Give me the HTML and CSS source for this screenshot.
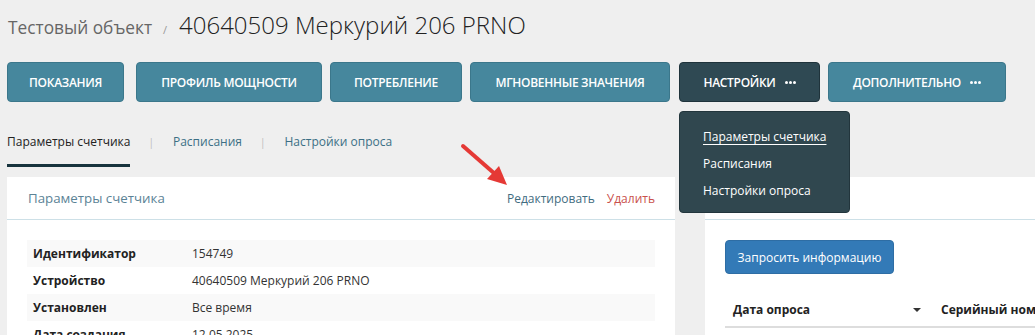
FILE: index.html
```html
<!DOCTYPE html>
<html lang="ru">
<head>
<meta charset="utf-8">
<title>40640509 Меркурий 206 PRNO</title>
<link rel="stylesheet" href="styles.css">
</head>
<body>
<div class="page">
  <div class="breadcrumb">
    <span class="crumb">Тестовый объект</span>
    <span class="sep">/</span>
    <h1 class="title">40640509 Меркурий 206 PRNO</h1>
  </div>

  <nav class="nav">
    <a class="btn b1">ПОКАЗАНИЯ</a>
    <a class="btn b2">ПРОФИЛЬ МОЩНОСТИ</a>
    <a class="btn b3">ПОТРЕБЛЕНИЕ</a>
    <a class="btn b4">МГНОВЕННЫЕ ЗНАЧЕНИЯ</a>
    <div class="btn-wrap">
      <a class="btn b5 active">НАСТРОЙКИ <span class="dots"><i></i><i></i><i></i></span></a>
      <div class="menu">
        <a class="menu-item current">Параметры счетчика</a>
        <a class="menu-item">Расписания</a>
        <a class="menu-item">Настройки опроса</a>
      </div>
    </div>
    <a class="btn b6">ДОПОЛНИТЕЛЬНО <span class="dots"><i></i><i></i><i></i></span></a>
  </nav>

  <div class="tabs">
    <a class="tab selected">Параметры счетчика</a>
    <span class="tab-sep">|</span>
    <a class="tab">Расписания</a>
    <span class="tab-sep">|</span>
    <a class="tab">Настройки опроса</a>
  </div>

  <div class="columns">
    <section class="card left">
      <header class="card-head">
        <span class="card-title">Параметры счетчика</span>
        <span class="actions">
          <a class="edit">Редактировать</a>
          <a class="delete">Удалить</a>
        </span>
        <svg class="arrow" width="60" height="50" viewBox="0 0 60 50">
          <line x1="4" y1="4" x2="36" y2="32" stroke="#e53935" stroke-width="4" stroke-linecap="round"/>
          <polygon points="48,43 28,37 40,24" fill="#e53935"/>
        </svg>
      </header>
      <div class="card-body">
        <table class="props">
          <tr><th>Идентификатор</th><td>154749</td></tr>
          <tr><th>Устройство</th><td>40640509 Меркурий 206 PRNO</td></tr>
          <tr><th>Установлен</th><td>Все время</td></tr>
          <tr><th>Дата создания</th><td>12.05.2025</td></tr>
        </table>
      </div>
    </section>

    <section class="card right">
      <header class="card-head"></header>
      <div class="card-body">
        <button class="primary">Запросить информацию</button>
        <table class="grid">
          <thead>
            <tr><th class="c1">Дата опроса <span class="caret"></span></th><th class="c2">Серийный номер</th></tr>
          </thead>
        </table>
      </div>
    </section>
  </div>
</div>
</body>
</html>
```

FILE: styles.css
```css
* { box-sizing: border-box; }
html, body { margin: 0; padding: 0; }
body {
  background: #efefef;
  font-family: "Open Sans", "Noto Sans", sans-serif;
  color: #333;
  width: 1035px;
  height: 335px;
  overflow: hidden;
}
.page { padding: 0 0 0 7px; }

.breadcrumb {
  display: flex;
  align-items: baseline;
  padding-top: 10px;
  height: 40px;
  margin-bottom: 22px;
  white-space: nowrap;
}
.crumb { font-size: 17.3px; color: #666; margin-left: 1px; line-height: 30px; }
.sep { font-size: 11px; color: #999; margin: 0 12px 0 11px; }
.title { font-size: 24px; font-weight: 300; color: #222; margin: 0; line-height: 30px; }

.nav { display: flex; gap: 8px; height: 40px; }
.btn {
  display: flex;
  align-items: center;
  justify-content: center;
  height: 40px;
  background: #46879d;
  border: 1px solid #3b778b;
  border-radius: 4px;
  color: #fff;
  font-size: 12px;
  font-weight: 600;
  letter-spacing: -0.3px;
  white-space: nowrap;
}
.b1 { width: 117px; margin-right: 4px; }
.b2 { width: 186px; }
.b3 { width: 132px; }
.b4 { width: 200px; }
.b5 { width: 141px; }
.b6 { width: 178px; }
.btn.active { background: #2f4953; border-color: #1f333b; }
.dots { display: inline-flex; gap: 1px; margin-left: 9px; }
.dots i { width: 3px; height: 3px; border-radius: 50%; background: #fff; display: block; }

.btn-wrap { position: relative; margin-left: 1px; }
.menu {
  position: absolute;
  top: 49px;
  left: 0;
  width: 171px;
  height: 102px;
  background: #30474f;
  border: 1px solid #22353c;
  border-radius: 4px;
  padding: 11px 0 0 23px;
  z-index: 5;
  display: flex;
  flex-direction: column;
}
.menu-item { color: #fff; font-size: 12px; line-height: 27px; }
.menu-item.current { text-decoration: underline; text-underline-offset: 3px; }

.tabs {
  display: flex;
  align-items: center;
  height: 37px;
  margin-top: 28px;
  font-size: 12px;
}
.tab { color: #3c6f85; line-height: 24px; position: relative; height: 37px; display: flex; align-items: flex-start; }
.tab.selected { color: #222; }
.tab.selected::after {
  content: "";
  position: absolute;
  left: 0; right: 0; bottom: 0;
  height: 3px;
  background: #17333d;
}
.tab-sep { color: #bbb; font-size: 10px; margin: 0 19px 13px 18px; }

.columns {
  display: grid;
  grid-template-columns: 668px 668px;
  gap: 30px;
  margin-top: 10px;
}
.card { background: #fff; height: 200px; }
.card-head {
  height: 43px;
  border-bottom: 1px solid #cde0e7;
  display: flex;
  align-items: center;
  padding: 0 20px 0 21px;
  position: relative;
}
.card-title { font-size: 13.3px; color: #5b8396; flex: 1; }
.actions { font-size: 12px; display: flex; gap: 12px; }
.edit { color: #3f6c80; }
.delete { color: #c9504c; }
.arrow { position: absolute; left: 452px; top: -35px; }

.card-body { padding: 20px; }
.props { width: 100%; border-collapse: collapse; font-size: 12px; }
.props tr { height: 27px; }
.props tr:nth-child(odd) { background: #f9f9f9; }
.props th { text-align: left; font-weight: 700; color: #222; width: 165px; padding: 0 6px; }
.props td { color: #333; padding: 0; }

.primary {
  background: #337ab7;
  border: 1px solid #2e6da4;
  border-radius: 4px;
  color: #fff;
  font-family: inherit;
  font-size: 12px;
  height: 34px;
  width: 169px;
  padding: 0;
  display: block;
}
.grid { border-collapse: collapse; margin-top: 18px; font-size: 12px; width: 700px; }
.grid th { text-align: left; font-weight: 700; color: #222; height: 35px; border-bottom: 2px solid #ddd; padding: 0 8px; white-space: nowrap; }
.grid th.c1 { width: 208px; position: relative; }
.caret {
  position: absolute;
  right: 12px;
  top: 16px;
  border-left: 4px solid transparent;
  border-right: 4px solid transparent;
  border-top: 4px solid #333;
}
```
